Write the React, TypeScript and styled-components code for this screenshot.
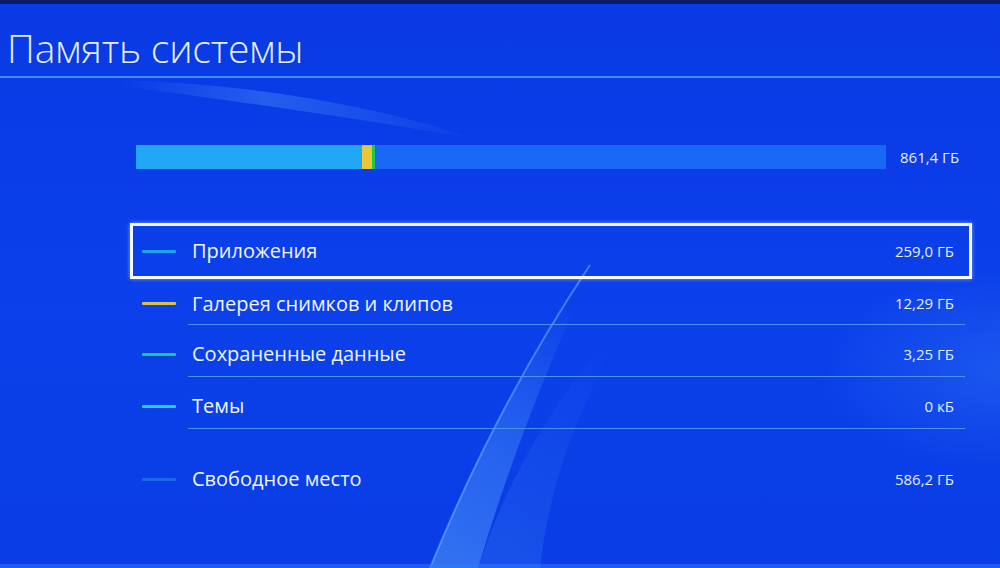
import React from 'react';
import styled, { createGlobalStyle } from 'styled-components';

const GlobalStyle = createGlobalStyle`
  html, body {
    margin: 0;
    padding: 0;
    background: #0b3fe6;
  }
  * {
    box-sizing: border-box;
  }
`;

const Screen = styled.div`
  position: relative;
  width: 1000px;
  height: 568px;
  overflow: hidden;
  background: linear-gradient(180deg, #093ae4 0%, #0b40ea 55%, #0a3de4 100%);
  font-family: 'Open Sans', 'Noto Sans', sans-serif;
  color: #eef3ff;
  display: flex;
  flex-direction: column;
`;

const Waves = styled.svg`
  position: absolute;
  inset: 0;
  width: 1000px;
  height: 568px;
  pointer-events: none;
  z-index: 0;
`;

const TopEdge = styled.div`
  height: 4px;
  background: #0a1b66;
  position: relative;
  z-index: 1;
`;

const Header = styled.header`
  position: relative;
  z-index: 1;
  height: 74px;
  padding-left: 7px;
  border-bottom: 2px solid #3f8cff;
  display: flex;
  align-items: flex-end;
  padding-bottom: 9px;
`;

const Title = styled.h1`
  margin: 0;
  font-weight: 300;
  font-size: 39px;
  line-height: 1;
  letter-spacing: -0.2px;
  color: #e6eeff;
`;

const Content = styled.main`
  position: relative;
  z-index: 1;
  padding: 0 28px 0 130px;
  flex: 1;
`;

const UsageRow = styled.div`
  margin-top: 67px;
  padding-left: 6px;
  display: flex;
  align-items: center;
  gap: 14px;
`;

const Bar = styled.div`
  width: 750px;
  height: 24px;
  display: flex;
  background: #1868f4;
`;

const Segment = styled.div<{ $color: string }>`
  height: 100%;
  background: ${({ $color }) => $color};
`;

const Total = styled.span`
  font-size: 15px;
  color: #e6eeff;
`;

const List = styled.ul`
  list-style: none;
  margin: 54px 0 0;
  padding: 0;
  width: 842px;
`;

const Row = styled.li<{ $selected?: boolean; $height: number; $gapTop?: number }>`
  display: flex;
  align-items: stretch;
  height: ${({ $height }) => $height}px;
  margin-top: ${({ $gapTop }) => $gapTop || 0}px;
  border: 3px solid ${({ $selected }) => ($selected ? '#f4f8ff' : 'transparent')};
  box-shadow: ${({ $selected }) => ($selected ? '0 0 4px rgba(200, 225, 255, 0.6)' : 'none')};
`;

const LegendSlot = styled.div`
  width: 55px;
  display: flex;
  align-items: center;
  padding-left: 9px;
`;

const Legend = styled.span<{ $color: string }>`
  display: block;
  width: 34px;
  height: 3px;
  border-radius: 1px;
  background: ${({ $color }) => $color};
`;

const RowBody = styled.div<{ $divider: boolean }>`
  flex: 1;
  display: flex;
  align-items: center;
  justify-content: space-between;
  margin-right: 4px;
  padding-left: 4px;
  padding-right: 11px;
  border-bottom: 1.5px solid ${({ $divider }) => ($divider ? '#4a92ff' : 'transparent')};
`;

const Label = styled.span`
  font-size: 20px;
  color: #f0f5ff;
`;

const Value = styled.span`
  font-size: 15px;
  color: #e6eeff;
`;

type Item = {
  label: string;
  value: string;
  color: string;
  gb: number;
  bar: string;
};

const TOTAL_GB = 861.4;

const items: Item[] = [
  { label: 'Приложения', value: '259,0 ГБ', color: '#1ea2f6', gb: 259.0, bar: '#22a6f6' },
  { label: 'Галерея снимков и клипов', value: '12,29 ГБ', color: '#d8c24c', gb: 12.29, bar: '#e9c73a' },
  { label: 'Сохраненные данные', value: '3,25 ГБ', color: '#20c98e', gb: 3.25, bar: '#22c84a' },
  { label: 'Темы', value: '0 кБ', color: '#1fd3f6', gb: 0, bar: '#1fd3f6' },
];

const rowHeights = [56, 49, 52, 52];

const App: React.FC = () => {
  return (
    <>
      <GlobalStyle />
      <Screen>
        <Waves viewBox="0 0 1000 568">
          <defs>
            <linearGradient id="topGlow" x1="0" y1="0" x2="1" y2="0">
              <stop offset="0" stopColor="#6fb4ff" stopOpacity="0" />
              <stop offset="0.4" stopColor="#6fb4ff" stopOpacity="0.28" />
              <stop offset="0.8" stopColor="#6fb4ff" stopOpacity="0.1" />
              <stop offset="1" stopColor="#6fb4ff" stopOpacity="0" />
            </linearGradient>
            <linearGradient id="ribbon" x1="0" y1="1" x2="0.3" y2="0">
              <stop offset="0" stopColor="#5aa8ff" stopOpacity="0.5" />
              <stop offset="0.55" stopColor="#5aa8ff" stopOpacity="0.3" />
              <stop offset="1" stopColor="#5aa8ff" stopOpacity="0" />
            </linearGradient>
            <linearGradient id="ribbonWide" x1="0" y1="1" x2="0.3" y2="0">
              <stop offset="0" stopColor="#4f9dff" stopOpacity="0.22" />
              <stop offset="1" stopColor="#4f9dff" stopOpacity="0" />
            </linearGradient>
            <radialGradient id="rightGlow" cx="1" cy="0.65" r="0.18">
              <stop offset="0" stopColor="#4d9cff" stopOpacity="0.25" />
              <stop offset="1" stopColor="#4d9cff" stopOpacity="0" />
            </radialGradient>
          </defs>
          <rect x="0" y="0" width="1000" height="568" fill="url(#rightGlow)" />
          <path d="M120 80 C 250 84, 370 104, 480 140 C 380 122, 260 104, 120 86 Z" fill="url(#topGlow)" />
          <path d="M430 568 C 470 470, 520 370, 600 250 C 550 360, 510 460, 478 568 Z" fill="url(#ribbon)" />
          <path d="M478 568 C 510 470, 560 390, 640 300 C 580 400, 550 480, 540 568 Z" fill="url(#ribbonWide)" />
          <path d="M430 568 C 470 470, 520 370, 590 265" stroke="#7dbcff" strokeOpacity="0.5" strokeWidth="2" fill="none" />
          <rect x="0" y="564" width="1000" height="4" fill="#2f7cff" fillOpacity="0.5" />
        </Waves>
        <TopEdge />
        <Header>
          <Title>Память системы</Title>
        </Header>
        <Content>
          <UsageRow>
            <Bar>
              {items.map((it) => (
                <Segment
                  key={it.label}
                  $color={it.bar}
                  style={{ width: `${(it.gb / TOTAL_GB) * 100}%` }}
                />
              ))}
            </Bar>
            <Total>861,4 ГБ</Total>
          </UsageRow>
          <List>
            {items.map((it, i) => (
              <Row key={it.label} $selected={i === 0} $height={rowHeights[i]}>
                <LegendSlot>
                  <Legend $color={it.color} />
                </LegendSlot>
                <RowBody $divider={i !== 0}>
                  <Label>{it.label}</Label>
                  <Value>{it.value}</Value>
                </RowBody>
              </Row>
            ))}
            <Row $height={52} $gapTop={21}>
              <LegendSlot>
                <Legend $color="#1a68ee" />
              </LegendSlot>
              <RowBody $divider={false}>
                <Label>Свободное место</Label>
                <Value>586,2 ГБ</Value>
              </RowBody>
            </Row>
          </List>
        </Content>
      </Screen>
    </>
  );
};

export default App;
